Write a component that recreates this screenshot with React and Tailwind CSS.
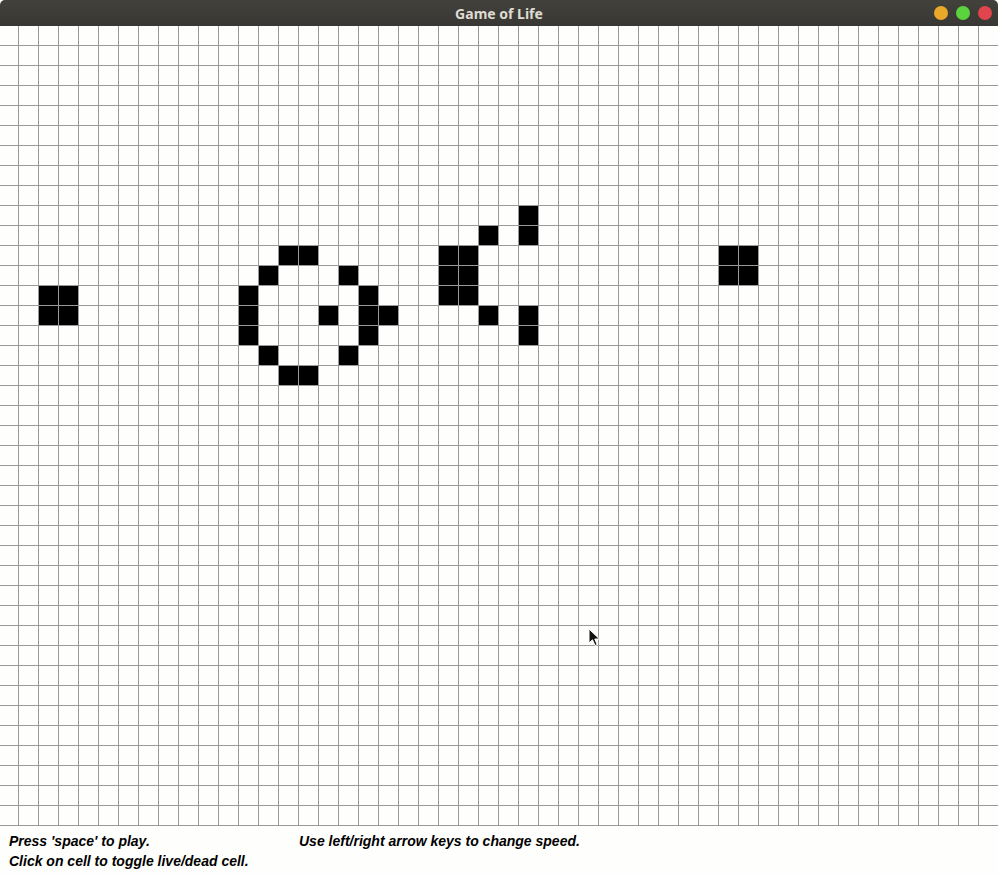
import React from "react";

const LIVE = [
  [1, 12], [2, 12], [1, 13], [2, 13],
  [13, 10], [14, 10], [12, 11], [16, 11], [11, 12], [17, 12], [11, 13], [15, 13], [17, 13], [18, 13], [11, 14], [17, 14], [12, 15], [16, 15], [13, 16], [14, 16],
  [25, 8], [25, 9], [23, 9], [21, 10], [22, 10], [21, 11], [22, 11], [21, 12], [22, 12], [23, 13], [25, 13], [25, 14],
  [35, 10], [36, 10], [35, 11], [36, 11],
];

const liveSet = new Set(LIVE.map(([i, j]) => `${i},${j}`));

function Grid() {
  const cells = [];
  for (let j = -1; j <= 38; j++) {
    for (let i = -1; i <= 49; i++) {
      const alive = liveSet.has(`${i},${j}`);
      cells.push(
        <div
          key={`${i},${j}`}
          className={
            alive
              ? "w-[20px] h-[20px] border-t border-l border-[#999999] bg-black"
              : "w-[20px] h-[20px] border-t border-l border-[#999999]"
          }
        />
      );
    }
  }
  return (
    <div className="h-[800px] overflow-hidden border-b border-[#999999]">
      <div className="grid grid-cols-[repeat(51,20px)] -mt-[1px] -ml-[2px] w-max">
        {cells}
      </div>
    </div>
  );
}

export default function App() {
  return (
    <div className="relative w-[998px] h-[875px] overflow-hidden bg-[#fefefc]">
      <div className="h-[26px] flex items-center justify-center relative rounded-t-[5px] bg-gradient-to-b from-[#42413c] to-[#383733]">
        <span
          className="text-[#dfdbd2] text-[14px] font-bold"
          style={{ fontFamily: '"Noto Sans", "Open Sans", sans-serif' }}
        >
          Game of Life
        </span>
        <div className="absolute right-[6px] top-[6px] flex gap-[8px]">
          <span className="w-[14px] h-[14px] rounded-full bg-[#e9a82a]" />
          <span className="w-[14px] h-[14px] rounded-full bg-[#5bd33f]" />
          <span className="w-[14px] h-[14px] rounded-full bg-[#e0454e]" />
        </div>
      </div>
      <Grid />
      <div
        className="flex pt-[5px] pl-[9px] text-[14px] leading-[20px] font-bold italic text-black"
        style={{ fontFamily: '"Liberation Sans", Arial, sans-serif' }}
      >
        <div className="w-[290px]">
          <div>Press 'space' to play.</div>
          <div>Click on cell to toggle live/dead cell.</div>
        </div>
        <div>
          <div>Use left/right arrow keys to change speed.</div>
        </div>
      </div>
      <svg
        className="absolute left-[588px] top-[628px]"
        width="14"
        height="20"
        viewBox="0 0 14 20"
      >
        <path
          d="M1 1 L1 15 L4.5 11.8 L7 17.5 L9.2 16.5 L6.8 11 L11.5 11 Z"
          fill="#111"
          stroke="#fff"
          strokeWidth="1"
          strokeLinejoin="round"
        />
      </svg>
    </div>
  );
}
